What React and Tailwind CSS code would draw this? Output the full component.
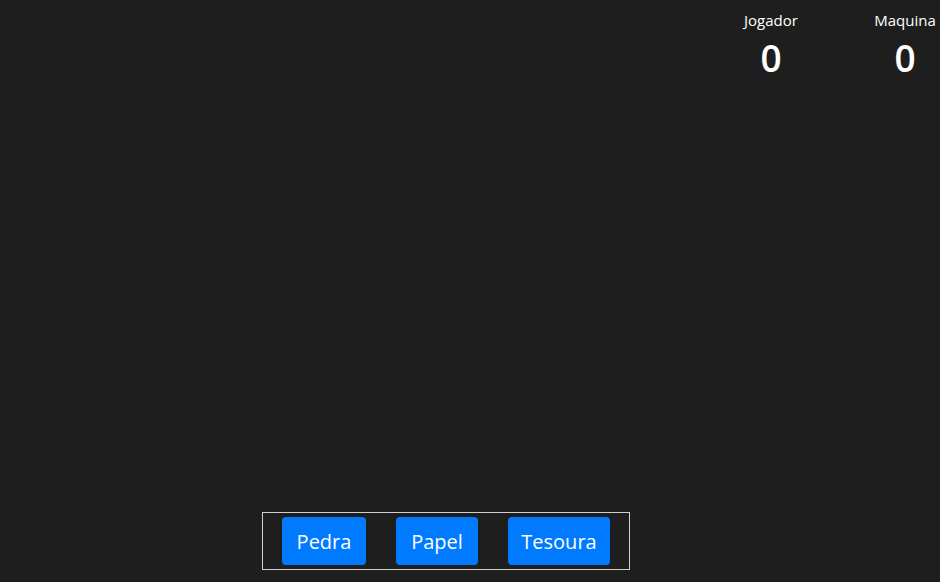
export default function App() {
  return (
    <div className="w-[940px] h-[582px] bg-[#1e1e1e] flex flex-col text-white" style={{ fontFamily: '"Segoe UI", "Open Sans", "Noto Sans", sans-serif' }}>
      <div className="flex justify-end gap-[72px] pr-[4px] pt-[9px]">
        <div className="w-[62px] flex flex-col items-center">
          <span className="text-[15px] leading-[22px]">Jogador</span>
          <span className="text-[37px] leading-[54px] font-semibold">0</span>
        </div>
        <div className="w-[62px] flex flex-col items-center">
          <span className="text-[15px] leading-[22px]">Maquina</span>
          <span className="text-[37px] leading-[54px] font-semibold">0</span>
        </div>
      </div>
      <div className="flex-1" />
      <div className="flex justify-start pl-[262px] pb-[12px]">
        <div className="border border-[#d0d0d0] flex gap-[30px] px-[19px] pt-[4px] pb-[4px]">
          <button className="h-[48px] w-[84px] pt-[2px] rounded-[4px] bg-[#007bff] text-[20px] text-white">Pedra</button>
          <button className="h-[48px] w-[82px] pt-[2px] rounded-[4px] bg-[#007bff] text-[20px] text-white">Papel</button>
          <button className="h-[48px] w-[102px] pt-[2px] rounded-[4px] bg-[#007bff] text-[20px] text-white">Tesoura</button>
        </div>
      </div>
    </div>
  );
}
